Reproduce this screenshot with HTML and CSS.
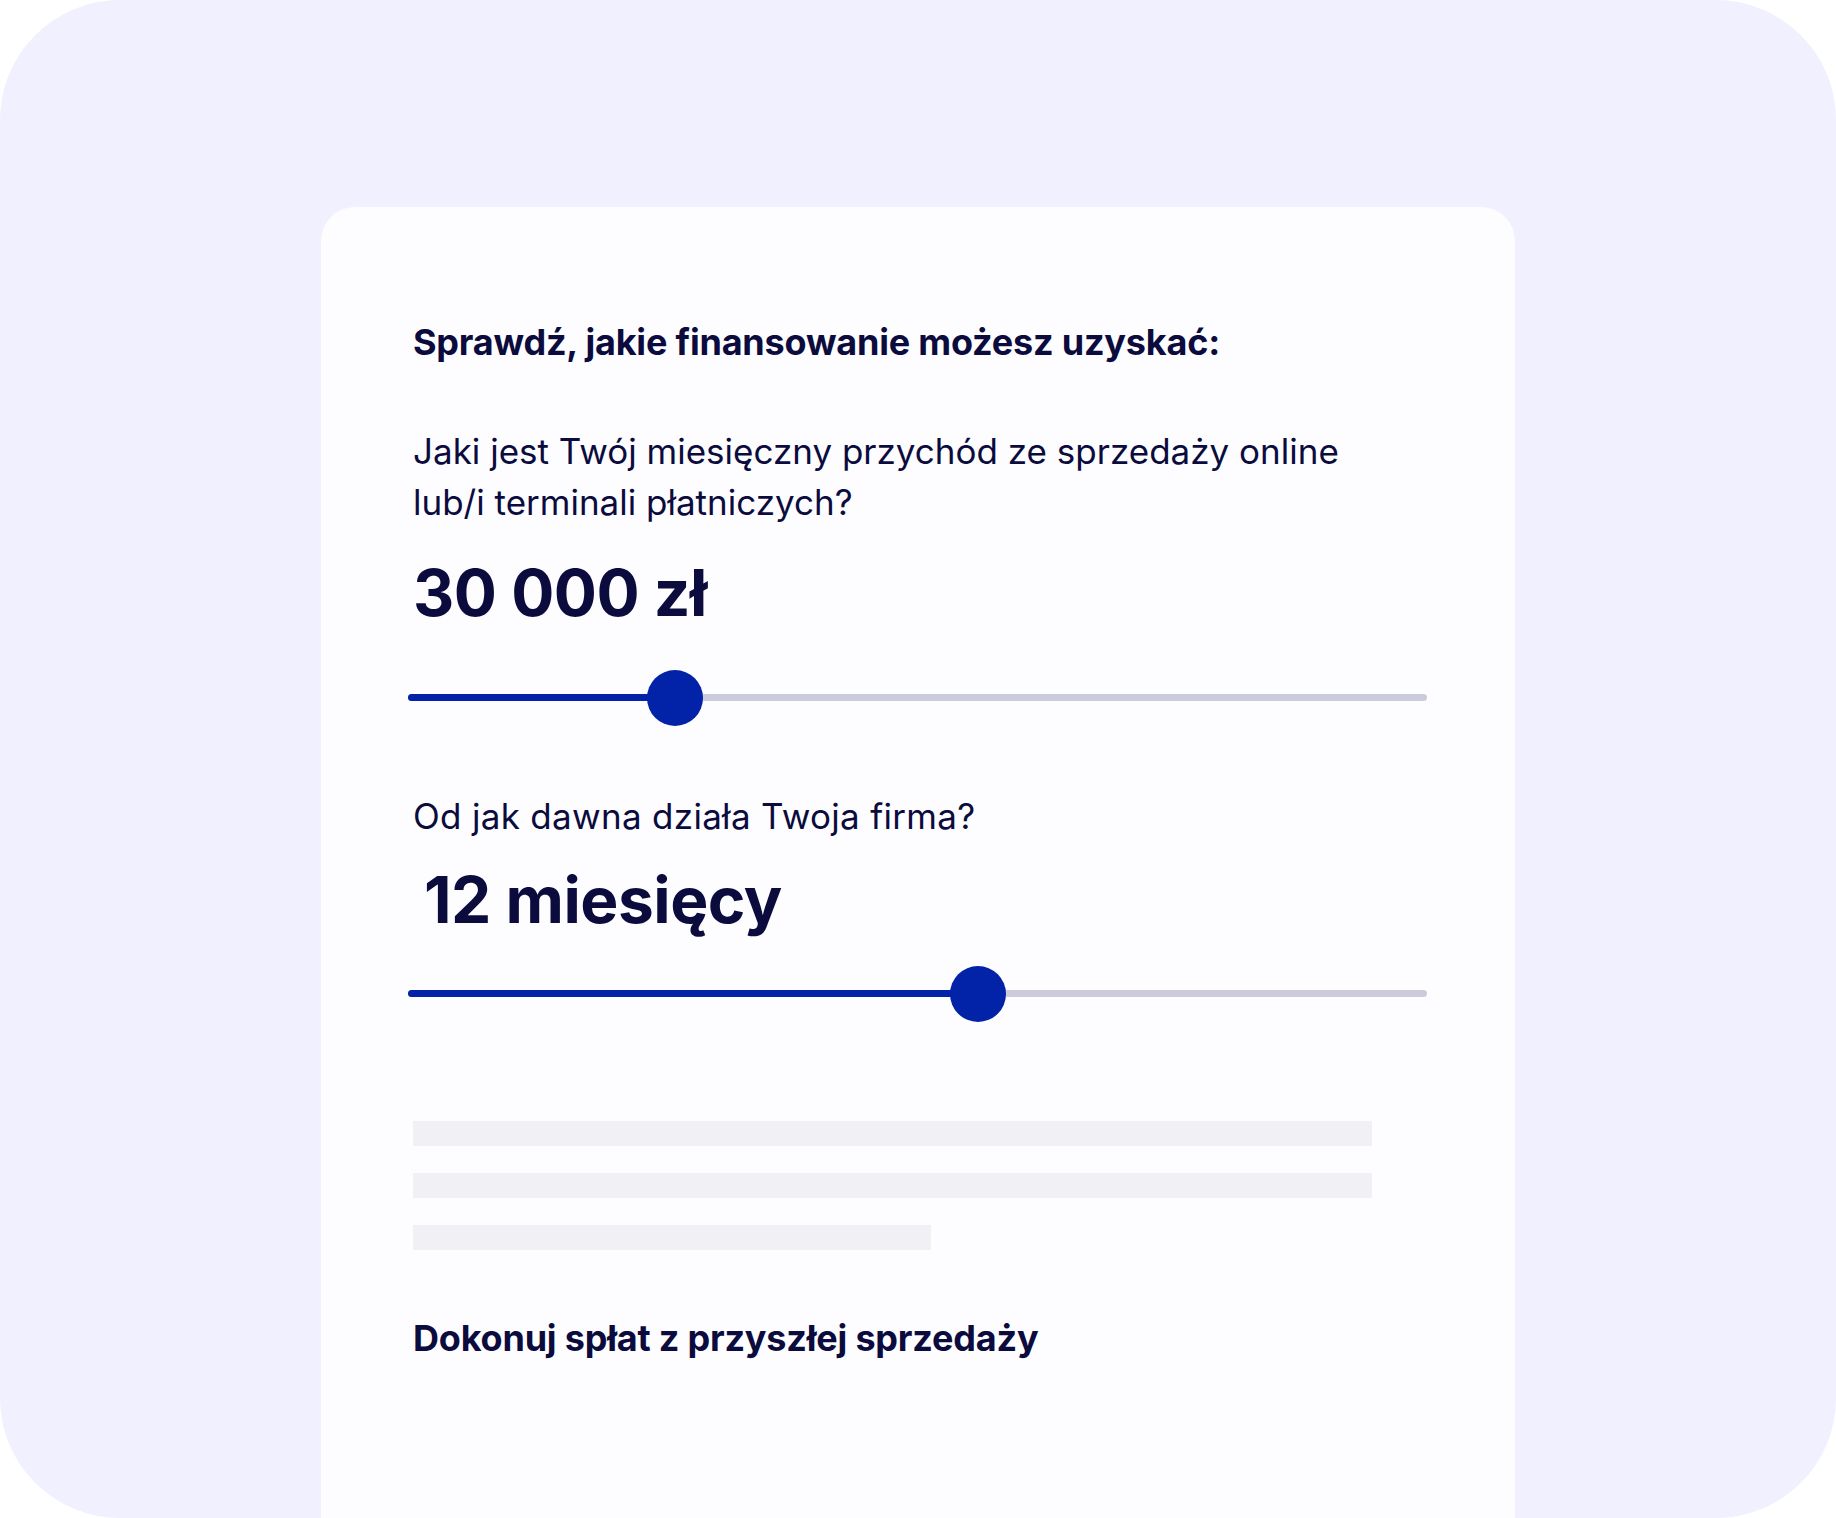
FILE: index.html
```html
<!DOCTYPE html>
<html lang="pl">
<head>
    <meta charset="UTF-8">
    <title>Finansowanie</title>
    <link rel="stylesheet" href="styles.css">
</head>
<body>
    <div class="frame">
        <div class="card">
            <h2 class="title">Sprawdź, jakie finansowanie możesz uzyskać:</h2>

            <p class="question q-revenue">Jaki jest Twój miesięczny przychód ze sprzedaży online<br>lub/i terminali płatniczych?</p>
            <div class="amount">30 000 zł</div>
            <div class="slider slider-revenue">
                <div class="track"></div>
                <div class="fill" style="width: 26.2%"></div>
                <div class="thumb" style="left: 26.2%"></div>
            </div>

            <p class="question q-age">Od jak dawna działa Twoja firma?</p>
            <div class="amount amount-months">12 miesięcy</div>
            <div class="slider slider-age">
                <div class="track"></div>
                <div class="fill" style="width: 55.9%"></div>
                <div class="thumb" style="left: 55.9%"></div>
            </div>

            <div class="placeholder">
                <div class="line"></div>
                <div class="line"></div>
                <div class="line short"></div>
            </div>

            <h3 class="subtitle">Dokonuj spłat z przyszłej sprzedaży</h3>
        </div>
    </div>
</body>
</html>
```

FILE: styles.css
```css
body {
    margin: 0;
    background-color: #fff;
    font-family: Inter, "Noto Sans", Arial, sans-serif;
    color: #0b0c3d;
}
.frame {
    width: 1836px;
    height: 1518px;
    background-color: #f0f0fe;
    border-radius: 120px;
    overflow: hidden;
    padding-top: 207px;
    box-sizing: border-box;
    display: flex;
    justify-content: center;
    align-items: stretch;
}
.card {
    width: 1194px;
    background-color: #fdfdff;
    border-radius: 34px 34px 0 0;
    padding: 114px 92px 0;
    box-sizing: border-box;
}
.title, .subtitle {
    margin: 0;
    font-size: 36px;
    line-height: 42px;
    font-weight: 700;
    letter-spacing: -0.2px;
}
.question {
    margin: 0;
    font-size: 35px;
    line-height: 51px;
    font-weight: 400;
    letter-spacing: 0;
}
.q-revenue {
    margin-top: 63px;
}
.q-age {
    margin-top: 65px;
    letter-spacing: 0.3px;
}
.amount {
    margin-top: 33px;
    font-size: 64px;
    line-height: 64px;
    font-weight: 700;
    letter-spacing: -0.5px;
}
.amount-months {
    margin-top: 26px;
    padding-left: 11px;
}
.slider {
    position: relative;
    height: 56px;
    margin: 45px -4px 0 -5px;
}
.slider-age {
    margin-top: 34px;
}
.track, .fill {
    position: absolute;
    left: 0;
    top: 24px;
    height: 7px;
    border-radius: 4px;
}
.track {
    right: 0;
    background-color: #cbcbdc;
}
.fill {
    background-color: #0222a8;
}
.thumb {
    position: absolute;
    top: 0;
    width: 56px;
    height: 56px;
    margin-left: -28px;
    border-radius: 50%;
    background-color: #0222a8;
}
.placeholder {
    margin-top: 99px;
    display: flex;
    flex-direction: column;
    gap: 27px;
}
.line {
    width: 959px;
    height: 25px;
    background-color: #f1f0f5;
}
.line.short {
    width: 518px;
}
.subtitle {
    margin-top: 67px;
}
```
